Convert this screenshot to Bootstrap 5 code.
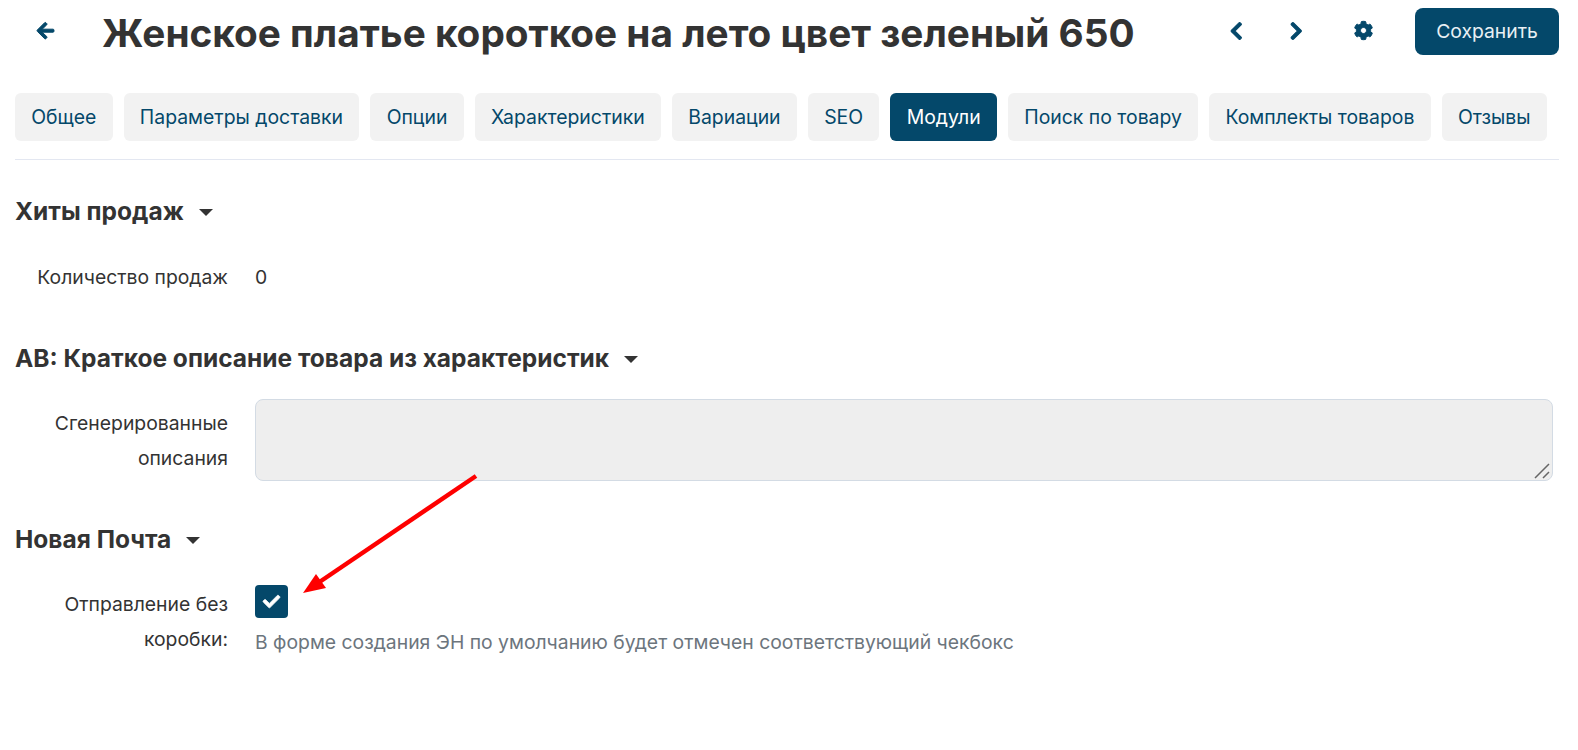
<!DOCTYPE html>
<html lang="ru">
<head>
<meta charset="utf-8">
<title>Товар</title>
<link href="https://cdn.jsdelivr.net/npm/bootstrap@5.3.0/dist/css/bootstrap.min.css" rel="stylesheet">
<style>
html,body{height:750px;overflow:hidden}
body{font-family:Inter,"Liberation Sans",sans-serif;font-size:19.35px;color:#333;background:#fff;position:relative}
.page-wrap{padding:8px 19px 0 15px}
.top-bar{height:47px;margin-bottom:38px}
.ic-btn{color:#04486a;display:flex;align-items:center;justify-content:center;height:47px;padding-bottom:2px}
.ic-back{width:60px}
.ic-nav{width:60px}
.ic-gear{width:74px;margin-right:15px}
.ic-btn svg{fill:#04486a;stroke:#04486a;stroke-width:26;display:block;overflow:visible}
.page-title{font-size:38.75px;font-weight:700;line-height:47px;margin:2px 0 0 27px;color:#333;white-space:nowrap}
.save-btn{background:#04486a;border:0;color:#e9f0f4;font-size:19.35px;border-radius:8px;width:144px;height:47px;padding:0}
.tab-row{gap:11px;padding-bottom:18px;border-bottom:1px solid #e3e7f1}
.tab-item{background:#f2f2f2;color:#04486a;font-size:19.4px;line-height:48px;height:48px;padding:0 16.3px;border-radius:6px;text-decoration:none;white-space:nowrap}
.tab-item.is-on{background:#04486a;color:#fff}
.sec-head{font-size:24.5px;font-weight:700;line-height:30px;margin:0;color:#333}
.caret-down{width:0;height:0;border-left:7px solid transparent;border-right:7px solid transparent;border-top:7px solid #333;margin-left:15px;margin-top:2px}
.lbl{width:213px;margin-right:27px;text-align:right;line-height:35px;padding-top:7px;flex:none}
.val{line-height:35px;padding-top:7px}
.area-box{position:relative;margin-right:6px}
.gen-area{display:block;width:100%;height:82px;background:#eee;border:1px solid #d3dbe4;border-radius:8px;resize:none}
.resize-mark{position:absolute;right:2px;bottom:2px}
.check-box{width:33px;height:33px;background:#04486a;border-radius:4px;display:flex;align-items:center;justify-content:center;margin-top:5px}
.check-box svg{fill:#fff;stroke:#fff;stroke-width:22;display:block;overflow:visible}
.hint{color:#6c757d;line-height:26px;margin-top:11px}
.arrow-over{position:absolute;left:0;top:0;pointer-events:none}
</style>
</head>
<body>
<div class="page-wrap">
  <div class="top-bar d-flex align-items-center">
    <a class="ic-btn ic-back" href="#" aria-label="Назад">
      <svg width="17" height="19.4" viewBox="0 0 448 512"><path d="M257.5 445.1l-22.2 22.2c-9.4 9.4-24.6 9.4-33.9 0L7 273c-9.4-9.4-9.4-24.6 0-33.9L201.4 44.7c9.4-9.4 24.6-9.4 33.9 0l22.2 22.2c9.5 9.5 9.3 25-.4 34.3L136.6 216H424c13.3 0 24 10.7 24 24v32c0 13.3-10.7 24-24 24H136.6l120.5 114.8c9.8 9.3 10 24.8.4 34.3z"/></svg>
    </a>
    <h1 class="page-title">Женское платье короткое на лето цвет зеленый 650</h1>
    <div class="ms-auto d-flex align-items-center">
      <a class="ic-btn ic-nav" href="#" aria-label="Предыдущий"><svg width="12.5" height="20" viewBox="0 0 320 512"><path d="M34.52 239.03L228.87 44.69c9.37-9.37 24.57-9.37 33.94 0l22.67 22.67c9.36 9.36 9.37 24.52.04 33.9L131.49 256l154.02 154.75c9.34 9.38 9.32 24.54-.04 33.9l-22.67 22.67c-9.37 9.37-24.57 9.37-33.94 0L34.52 272.97c-9.37-9.37-9.37-24.57 0-33.94z"/></svg></a>
      <a class="ic-btn ic-nav" href="#" aria-label="Следующий"><svg width="12.5" height="20" viewBox="0 0 320 512"><path d="M285.476 272.971L91.132 467.314c-9.373 9.373-24.569 9.373-33.941 0l-22.667-22.667c-9.357-9.357-9.375-24.522-.04-33.901L188.505 256 34.484 101.255c-9.335-9.379-9.317-24.544.04-33.901l22.667-22.667c9.373-9.373 24.569-9.373 33.941 0L285.475 239.03c9.373 9.372 9.373 24.568.001 33.941z"/></svg></a>
      <a class="ic-btn ic-gear" href="#" aria-label="Настройки"><svg width="19" height="19" viewBox="0 0 512 512"><path d="M487.4 315.7l-42.6-24.6c4.3-23.2 4.3-47 0-70.2l42.6-24.6c4.9-2.8 7.1-8.6 5.5-14-11.1-35.6-30-67.8-54.7-94.6-3.8-4.1-10-5.1-14.8-2.3L380.8 110c-17.9-15.4-38.5-27.3-60.8-35.1V25.8c0-5.6-3.9-10.5-9.4-11.7-36.7-8.2-74.3-7.8-109.2 0-5.5 1.2-9.4 6.1-9.4 11.7V75c-22.2 7.9-42.8 19.8-60.8 35.1L88.7 85.5c-4.9-2.8-11-1.9-14.8 2.3-24.7 26.7-43.6 58.9-54.7 94.6-1.7 5.4.6 11.2 5.5 14L67.3 221c-4.3 23.2-4.3 47 0 70.2l-42.6 24.6c-4.9 2.8-7.1 8.6-5.5 14 11.1 35.6 30 67.8 54.7 94.6 3.8 4.1 10 5.1 14.8 2.3l42.6-24.6c17.9 15.4 38.5 27.3 60.8 35.1v49.2c0 5.6 3.9 10.5 9.4 11.7 36.7 8.2 74.3 7.8 109.2 0 5.5-1.2 9.4-6.1 9.4-11.7v-49.2c22.2-7.9 42.8-19.8 60.8-35.1l42.6 24.6c4.9 2.8 11 1.9 14.8-2.3 24.7-26.7 43.6-58.9 54.7-94.6 1.5-5.5-.7-11.3-5.6-14.1zM256 336c-44.1 0-80-35.9-80-80s35.9-80 80-80 80 35.9 80 80-35.9 80-80 80z"/></svg></a>
      <button class="btn save-btn" type="button">Сохранить</button>
    </div>
  </div>

  <div class="tab-row d-flex">
    <a class="tab-item" href="#">Общее</a>
    <a class="tab-item" href="#">Параметры доставки</a>
    <a class="tab-item" href="#">Опции</a>
    <a class="tab-item" href="#">Характеристики</a>
    <a class="tab-item" href="#">Вариации</a>
    <a class="tab-item" href="#">SEO</a>
    <a class="tab-item is-on" href="#">Модули</a>
    <a class="tab-item" href="#">Поиск по товару</a>
    <a class="tab-item" href="#">Комплекты товаров</a>
    <a class="tab-item" href="#">Отзывы</a>
  </div>

  <div class="d-flex align-items-center" style="margin-top:36px">
    <h2 class="sec-head">Хиты продаж</h2><span class="caret-down"></span>
  </div>
  <div class="d-flex" style="margin-top:27px">
    <div class="lbl">Количество продаж</div><div class="val">0</div>
  </div>

  <div class="d-flex align-items-center" style="margin-top:48px">
    <h2 class="sec-head">АВ: Краткое описание товара из характеристик</h2><span class="caret-down"></span>
  </div>
  <div class="d-flex" style="margin-top:26px">
    <div class="lbl">Сгенерированные описания</div>
    <div class="flex-grow-1 area-box">
      <textarea class="gen-area" disabled aria-label="Сгенерированные описания"></textarea>
      <svg class="resize-mark" width="17" height="16" viewBox="0 0 17 16"><path d="M1 15 15 1M9 15 15 9" stroke="#666" stroke-width="1.5" fill="none"/></svg>
    </div>
  </div>

  <div class="d-flex align-items-center" style="margin-top:43px">
    <h2 class="sec-head">Новая Почта</h2><span class="caret-down"></span>
  </div>
  <div class="d-flex" style="margin-top:26px">
    <div class="lbl">Отправление без коробки:</div>
    <div>
      <span class="check-box"><svg width="17" height="17" viewBox="0 0 512 512"><path d="M173.898 439.404l-166.4-166.4c-9.997-9.997-9.997-26.206 0-36.204l36.203-36.204c9.997-9.998 26.207-9.998 36.204 0L192 312.69 432.095 72.596c9.997-9.997 26.207-9.997 36.204 0l36.203 36.204c9.997 9.997 9.997 26.206 0 36.204l-294.4 294.401c-9.998 9.999-26.207 9.999-36.204-.001z"/></svg></span>
      <div class="hint">В форме создания ЭН по умолчанию будет отмечен соответствующий чекбокс</div>
    </div>
  </div>
</div>
<svg class="arrow-over" width="1578" height="750" viewBox="0 0 1578 750"><path d="M476 476 318 583" stroke="#fe0000" stroke-width="4.5" fill="none"/><path d="M303 593 316 574 326 588Z" fill="#fe0000"/></svg>
</body>
</html>
